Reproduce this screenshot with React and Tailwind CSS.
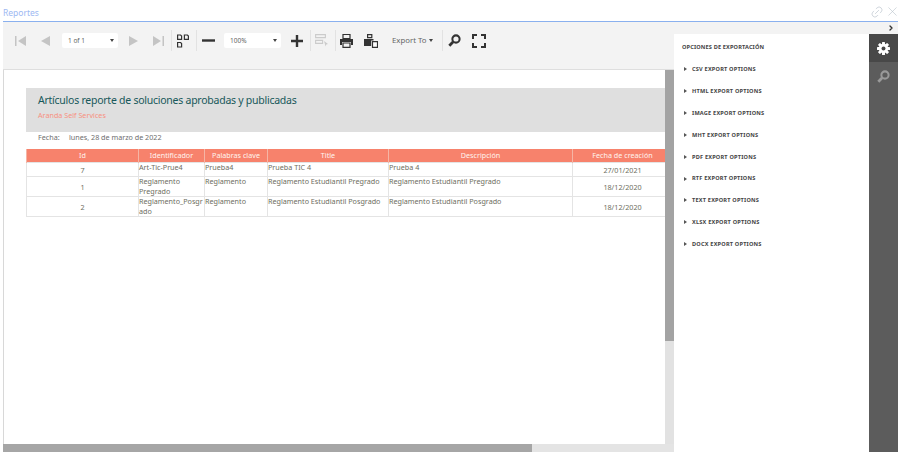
import React from "react";
import { ChevronRight, Link2, X } from "lucide-react";

const exportsList = ["CSV", "HTML", "IMAGE", "MHT", "PDF", "RTF", "TEXT", "XLSX", "DOCX"];

function Sep({ ml }) {
  return <div className={`${ml} w-px h-[21px] bg-[#e2e2e2]`} />;
}

function Tri({ dir, bar, ml }) {
  const w = bar ? 11 : 9;
  return (
    <svg className={ml} width={w} height="12" viewBox={`0 0 ${w} 12`} fill="#c4c4c4">
      {dir === "l" && bar && <rect x="0" y="1" width="1.5" height="10" />}
      {dir === "l" && <path d={bar ? "M11 1V11L3 6Z" : "M9 1V11L0 6Z"} />}
      {dir === "r" && <path d={bar ? "M0 1V11L8 6Z" : "M0 1V11L9 6Z"} />}
      {dir === "r" && bar && <rect x="9.5" y="1" width="1.5" height="10" />}
    </svg>
  );
}

function Caret({ ml = "" }) {
  return <span className={`${ml} w-0 h-0 border-l-[2.5px] border-r-[2.5px] border-t-[3px] border-l-transparent border-r-transparent border-t-[#444]`} />;
}

function Select({ label, cls }) {
  return (
    <div className={`${cls} h-[15px] bg-white rounded-[2px] flex items-center justify-between pl-[6px] pr-[4px] text-[6.5px] text-[#666] [font-family:'Roboto',sans-serif]`}>
      <span>{label}</span>
      <Caret />
    </div>
  );
}

function SearchIcon({ size, color, cls }) {
  return (
    <svg className={cls} width={size} height={size} viewBox="0 0 14 14" fill="none" stroke={color}>
      <circle cx="8.6" cy="5.4" r="3.9" strokeWidth="2.2" />
      <path d="M5.6 8.4 L1.4 12.6" strokeWidth="3" />
    </svg>
  );
}

function Gear() {
  const teeth = [0, 45, 90, 135];
  return (
    <svg width="13" height="13" viewBox="0 0 14 14">
      {teeth.map((a) => (
        <rect key={a} x="5.4" y="0" width="3.2" height="14" rx="0.6" fill="#fff" transform={`rotate(${a} 7 7)`} />
      ))}
      <circle cx="7" cy="7" r="5" fill="#fff" />
      <circle cx="7" cy="7" r="2.1" fill="#484848" />
    </svg>
  );
}

const font = "[font-family:'Noto_Sans',sans-serif]";
const cell = `border border-[#e4e4e4] align-top p-0 text-[7.2px] leading-[9.5px] text-[#6e6e5e] [overflow-wrap:anywhere] ${font}`;
const head = `border-x border-[#f5b5a5] bg-[#f7826c] text-[#fff4ef] text-[7.2px] font-normal leading-[13px] h-[13px] p-0 text-center ${font}`;
const center = `border border-[#e4e4e4] align-middle text-center p-0 pt-[1px] text-[7.2px] text-[#6e6e5e] ${font}`;

const rows = [
  { h: "h-[14px]", id: "7", a: "Art-Tic-Prue4", b: "Prueba4", c: "Prueba TIC 4", d: "Prueba 4", e: "27/01/2021" },
  { h: "h-[20px]", id: "1", a: "Reglamento Pregrado", b: "Reglamento", c: "Reglamento Estudiantil Pregrado", d: "Reglamento Estudiantil Pregrado", e: "18/12/2020" },
  { h: "h-[19px]", id: "2", a: "Reglamento_Posgrado", b: "Reglamento", c: "Reglamento Estudiantil Posgrado", d: "Reglamento Estudiantil Posgrado", e: "18/12/2020" },
];

export default function App() {
  return (
    <div className="w-[900px] h-[454px] bg-white flex flex-col overflow-hidden [font-family:'Roboto',sans-serif]">
      <header className="h-[22px] shrink-0 ml-[3px] mr-[2px] flex items-end justify-between pb-[2px] border-b border-[#8ab0ee]">
        <span className="text-[8.5px] leading-[12px] text-[#9db8f2]">Reportes</span>
        <div className="flex items-center gap-[1px] text-[#b4bec8]">
          <Link2 size={14} strokeWidth={1} className="-rotate-45" />
          <X size={15} strokeWidth={0.9} className="-mr-[2px]" />
        </div>
      </header>

      <div className="flex-1 flex min-h-0 pb-[2px] pr-[2px]">
        <div className="w-[674px] shrink-0 flex flex-col">
          <div className="h-[48px] ml-[3px] bg-[#f3f3f3] border-b border-[#dedede] flex items-start pt-[11px] pl-[12px] shrink-0">
            <div className="flex items-center h-[15px]">
              <Tri dir="l" bar />
              <Tri dir="l" ml="ml-[15px]" />
              <Select label="1 of 1" cls="ml-[12px] w-[56px]" />
              <Tri dir="r" ml="ml-[11px]" />
              <Tri dir="r" bar ml="ml-[15px]" />
              <Sep ml="ml-[7px]" />
              <svg className="ml-[5px]" width="12" height="14" viewBox="0 0 12 14" fill="none" stroke="#333" strokeWidth="1.2">
                <path d="M.6 1h3l1 1v3.4h-4zM7.4 1h3l1 1v3.4h-4zM.6 8.5h3l1 1V13h-4z" />
              </svg>
              <Sep ml="ml-[7px]" />
              <svg className="ml-[5px]" width="13" height="3" viewBox="0 0 13 3"><rect width="13" height="2.4" y=".3" fill="#333" /></svg>
              <Select label="100%" cls="ml-[9px] w-[57px]" />
              <svg className="ml-[10px]" width="12" height="12" viewBox="0 0 12 12" fill="#333"><path d="M4.8 0h2.4v4.8H12v2.4H7.2V12H4.8V7.2H0V4.8h4.8z" /></svg>
              <Sep ml="ml-[7px]" />
              <svg className="ml-[4px]" width="14" height="13" viewBox="0 0 14 13" fill="none" stroke="#cbcbcb" strokeWidth="1.1">
                <path d="M.6.6h9.8v3H.6zM.6 6.4h7v3H.6z" />
                <path d="M9 7l4 3-1.8.4-.6 2z" fill="#cbcbcb" stroke="none" />
              </svg>
              <Sep ml="ml-[6px]" />
              <svg className="ml-[4px]" width="13" height="14" viewBox="0 0 13 14">
                <path d="M3 .5h7v4H3z" fill="none" stroke="#333" strokeWidth="1.2" />
                <path d="M0 5h13v6h-2V8H2v3H0z" fill="#333" />
                <path d="M3 9h7v4.4H3z" fill="none" stroke="#333" strokeWidth="1.2" />
              </svg>
              <svg className="ml-[11px]" width="14" height="14" viewBox="0 0 14 14">
                <path d="M3.6.6h4.2v3H3.6z" fill="none" stroke="#333" strokeWidth="1.2" />
                <path d="M0 5h9.5v1.6H7.2V12H0z" fill="#333" />
                <path d="M8.5 7.6h5v5.8h-5z" fill="#fff" stroke="#333" strokeWidth="1.2" />
              </svg>
              <span className="ml-[14px] text-[7.8px] text-[#666] w-[34px] whitespace-nowrap [font-family:'Noto_Sans',sans-serif]">Export To</span>
              <Caret ml="ml-[3px]" />
              <Sep ml="ml-[9px]" />
              <SearchIcon size={13} color="#333" cls="ml-[5px]" />
              <svg className="ml-[11px]" width="14" height="14" viewBox="0 0 14 14" fill="none" stroke="#333" strokeWidth="2">
                <path d="M1 5V1h4M9 1h4v4M13 9v4H9M5 13H1V9" />
              </svg>
            </div>
          </div>

          <div className="flex-1 min-h-0 ml-[3px] flex flex-col">
            <div className="flex-1 min-h-0 flex">
              <div className="flex-1 min-w-0 overflow-hidden bg-white pt-[18px] border-l border-[#d8d8d8]">
                <div className="ml-[22px] h-[44px] bg-[#dfdfdf] pl-[12px] pt-[4px]">
                  <div className="text-[10.5px] leading-[16px] tracking-[-0.25px] text-[#17585a] whitespace-nowrap [font-family:'Lato',sans-serif]">Artículos reporte de soluciones aprobadas y publicadas</div>
                  <div className={`text-[7.2px] leading-[12px] mt-[1px] text-[#f7917f] ${font}`}>Aranda Self Services</div>
                </div>
                <div className={`ml-[34px] h-[17px] pb-[7px] flex items-center text-[7.2px] text-[#6e6e6e] ${font}`}>
                  <span className="w-[31px]">Fecha:</span>
                  <span>lunes, 28 de marzo de 2022</span>
                </div>
                <table className="ml-[22px] w-[646px] max-w-none table-fixed border-collapse">
                  <colgroup>
                    <col className="w-[112px]" />
                    <col className="w-[66px]" />
                    <col className="w-[63px]" />
                    <col className="w-[121px]" />
                    <col className="w-[184px]" />
                    <col className="w-[100px]" />
                  </colgroup>
                  <thead>
                    <tr>
                      {["Id", "Identificador", "Palabras clave", "Title", "Descripción", "Fecha de creación"].map((t) => (
                        <th key={t} className={head}>{t}</th>
                      ))}
                    </tr>
                  </thead>
                  <tbody>
                    {rows.map((r) => (
                      <tr key={r.id} className={r.h}>
                        <td className={center}>{r.id}</td>
                        <td className={cell}>{r.a}</td>
                        <td className={cell}>{r.b}</td>
                        <td className={cell}>{r.c}</td>
                        <td className={cell}>{r.d}</td>
                        <td className={center}>{r.e}</td>
                      </tr>
                    ))}
                  </tbody>
                </table>
              </div>
              <div className="w-[9px] shrink-0 bg-[#e2e2e2] flex flex-col">
                <div className="h-[271px] bg-[#a3a3a3]" />
              </div>
            </div>
            <div className="h-[8px] shrink-0 bg-[#e4e4e4]">
              <div className="h-full w-[529px] bg-[#a6a6a6]" />
            </div>
          </div>
        </div>

        <div className="flex-1 flex flex-col min-w-0">
          <div className="h-[12px] shrink-0 bg-[#f3f3f3] flex items-center justify-end pr-[3px]">
            <ChevronRight size={8} strokeWidth={4} className="text-[#333]" />
          </div>
          <div className="flex-1 flex min-h-0">
            <div className="flex-1 bg-white pl-[8px] pt-[9px] [font-family:'Liberation_Sans',sans-serif]">
              <div className="text-[5.6px] leading-[8px] font-bold text-[#444] tracking-[0.15px] uppercase">Opciones de exportación</div>
              <div className="mt-[5px]">
                {exportsList.map((n) => (
                  <div key={n} className="h-[21.85px] flex items-center pl-[2px] pt-[5px]">
                    <span className="w-0 h-0 border-t-[2px] border-b-[2px] border-l-[3px] border-t-transparent border-b-transparent border-l-[#555]" />
                    <span className="ml-[5px] text-[5.6px] font-bold text-[#444] tracking-[0.2px]">{n} EXPORT OPTIONS</span>
                  </div>
                ))}
              </div>
            </div>
            <div className="w-[29px] shrink-0 bg-[#5c5c5c] flex flex-col">
              <div className="h-[28px] bg-[#484848] flex items-center justify-center">
                <Gear />
              </div>
              <div className="h-[28px] flex items-center justify-center">
                <SearchIcon size={13} color="#9a9a9a" />
              </div>
            </div>
          </div>
        </div>
      </div>
    </div>
  );
}
